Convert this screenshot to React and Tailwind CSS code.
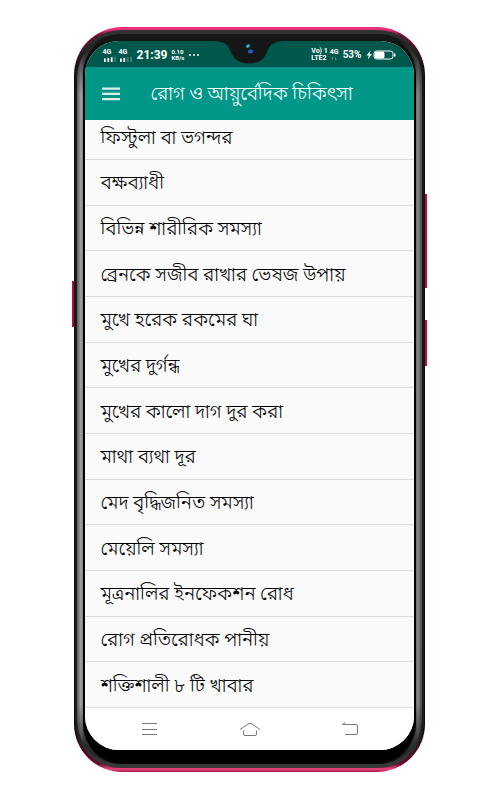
const rows = [
  'বক্ষব্যাধী',
  'বিভিন্ন শারীরিক সমস্যা',
  'ব্রেনকে সজীব রাখার ভেষজ উপায়',
  'মুখে হরেক রকমের ঘা',
  'মুখের দুর্গন্ধ',
  'মুখের কালো দাগ দুর করা',
  'মাথা ব্যথা দূর',
  'মেদ বৃদ্ধিজনিত সমস্যা',
  'মেয়েলি সমস্যা',
  'মূত্রনালির ইনফেকশন রোধ',
  'রোগ প্রতিরোধক পানীয়',
  'শক্তিশালী ৮ টি খাবার',
];

function Signal({ bars }) {
  return (
    <div className="flex w-4 flex-col items-start">
      <span className="text-[7px] leading-[7px] font-bold">4G</span>
      <svg viewBox="0 0 14 6" className="h-[6px] w-[14px]">
        {[0, 1, 2, 3].map((i) => (
          <rect key={i} x={1 + i * 3.4} y={2.5 - i * 0.6} width="1.8" height={3.5 + i * 0.6} fill="white" opacity={i < bars ? 1 : 0.25} />
        ))}
      </svg>
    </div>
  );
}

function StatusBar() {
  return (
    <div className="flex h-[26px] items-center justify-between bg-[#00574b] px-[18px] pt-[2px] text-white">
      <div className="flex items-center">
        <Signal bars={3} />
        <Signal bars={2} />
        <span className="ml-[2px] text-[12px] leading-3 font-bold">21:39</span>
        <div className="ml-1 flex flex-col text-[6px] leading-[6px] font-bold">
          <span>0.10</span>
          <span>KB/s</span>
        </div>
        <svg viewBox="0 0 12 4" className="ml-1 h-1 w-3" fill="white">
          <circle cx="2" cy="2" r="1" />
          <circle cx="6" cy="2" r="1" />
          <circle cx="10" cy="2" r="1" />
        </svg>
      </div>
      <div className="flex items-center">
        <div className="flex flex-col text-[7px] leading-[7px] font-bold">
          <span>Vo) 1</span>
          <span>LTE2</span>
        </div>
        <div className="ml-[2px] flex flex-col items-center">
          <span className="text-[7px] leading-[7px] font-bold">4G</span>
          <svg viewBox="0 0 8 5" className="h-[5px] w-2" fill="none" stroke="white" opacity="0.4">
            <path d="M2.500 4V1M1 2.200 2.500 1M5.500 1V4M7 2.800 5.500 4" strokeWidth="0.7" />
          </svg>
        </div>
        <span className="ml-1 text-[10px] leading-3 font-bold">53%</span>
        <svg viewBox="0 0 30 10" className="ml-1 h-[10px] w-[30px]">
          <path d="M4.6 0.5 0.5 5.6H2.8L1.8 9.5 6 4.2H3.6Z" fill="white" />
          <rect x="8" y="1" width="19" height="8" rx="2.5" fill="none" stroke="white" />
          <rect x="8.5" y="1.5" width="10" height="7" rx="2" fill="white" />
          <rect x="28" y="3.5" width="1.5" height="3" fill="white" />
        </svg>
      </div>
    </div>
  );
}

export default function App() {
  return (
    <main className="flex min-h-screen justify-center bg-white pt-[27px] font-['Roboto','Noto_Sans_Bengali','Noto_Sans',sans-serif]">
      <div className="relative h-fit w-full max-w-[351px]">
        <span className="absolute top-[254px] -left-[2px] h-[46px] w-1 bg-[#b5093f]" />
        <span className="absolute top-[167px] -right-[2px] h-[94px] w-1 bg-[#b5093f]" />
        <span className="absolute top-[293px] -right-[2px] h-[46px] w-1 bg-[#b5093f]" />
        <div className="relative overflow-hidden rounded-[48px] bg-[linear-gradient(to_bottom,#e8317a_0,#e8317a_3px,#7d0a33_8px,#14070c_45px,#14070c_calc(100%-45px),#6d0a2d_calc(100%-8px),#f0447e_calc(100%-3px),#a01c4c_100%)] px-px pt-[3px] pb-1">
          <div className="rounded-[46px] bg-[linear-gradient(to_bottom,#303332_0,#151617_40px,#1b1c20_calc(100%-40px),#393b3a_100%)] px-[2px] py-1">
            <div className="rounded-[44px] bg-[linear-gradient(to_bottom,#101111_0,#10111100_60px,#10111100_calc(100%-60px),#101111_100%),linear-gradient(to_right,#5a5f5e_0,#a0a5a1_4px,#6b706d_7px,#5a5f5e_50%,#6b706d_calc(100%-6px),#858a86_calc(100%-4px),#454746_100%)] px-[6px]">
              <div className="rounded-[40px] bg-[linear-gradient(to_bottom,#181a1a_0,#000000_40px)] px-[2px] pt-[7px] pb-[14px]">
                <section className="relative overflow-hidden rounded-[34px] bg-white">
                  <StatusBar />
                  <header className="flex h-[53px] items-center bg-[#009688] pl-[17px] text-white">
                    <button type="button" aria-label="মেনু" className="h-[14px] w-[18px]">
                      <svg viewBox="0 0 18 14" className="h-[14px] w-[18px]" fill="#d9efec">
                        <path d="M0 0.500h18v2.200H0zM0 5.700h18v2.200H0zM0 11h18v2.200H0z" />
                      </svg>
                    </button>
                    <h1 className="ml-[31px] text-[19px] leading-8 font-light whitespace-nowrap">রোগ ও আয়ুর্বেদিক চিকিৎসা</h1>
                  </header>
                  <ul className="flex h-[588px] flex-col bg-[#fafafa] text-[19px] leading-8 font-light text-black">
                    <li className="flex h-10 items-center border-b border-[#dcdcdc] pb-1 pl-4 whitespace-nowrap">ফিস্টুলা বা ভগন্দর</li>
                    {rows.map((row) => (
                      <li key={row} className="flex flex-1 items-center border-b border-[#dcdcdc] pt-[2px] pl-4 whitespace-nowrap">
                        {row}
                      </li>
                    ))}
                  </ul>
                  <nav className="flex h-[42px] items-center justify-center gap-[78px] bg-white pl-[2px]">
                    <button type="button" aria-label="Recent">
                      <svg viewBox="0 0 22 16" className="h-4 w-[22px]" fill="none" stroke="#777">
                        <path d="M3 2.5h15M3 8.500h15M3 13.5h15" />
                      </svg>
                    </button>
                    <button type="button" aria-label="Home">
                      <svg viewBox="0 0 22 16" className="h-4 w-[22px]" fill="none" stroke="#777">
                        <path d="M1 8.500 9 3Q11 1.800 13 3L21 8.500M4.500 9.500V13Q4.500 14.500 6 14.500H16Q17.500 14.500 17.500 13V9.500" />
                      </svg>
                    </button>
                    <button type="button" aria-label="Back">
                      <svg viewBox="0 0 22 16" className="h-4 w-[22px]" fill="none" stroke="#777">
                        <path d="M6.500 1.500 3.500 3.500H17Q18.500 3.500 18.500 5V12Q18.500 13.500 17 13.500H6" />
                      </svg>
                    </button>
                  </nav>
                  <svg viewBox="0 0 76 23" className="absolute top-0 left-1/2 h-[23px] w-[76px] -translate-x-1/2">
                    <path d="M0 0C15 0 17 4 20 11 23 19 29 22.500 38 22.500S53 19 56 11C59 4 61 0 76 0Z" fill="#141617" />
                    <ellipse cx="37" cy="5" rx="2" ry="1.500" fill="#2bb5ef" transform="rotate(-35 37 5)" />
                    <ellipse cx="39.500" cy="10.500" rx="2.500" ry="2" fill="#2a5fd0" />
                  </svg>
                </section>
              </div>
            </div>
          </div>
        </div>
      </div>
    </main>
  );
}
